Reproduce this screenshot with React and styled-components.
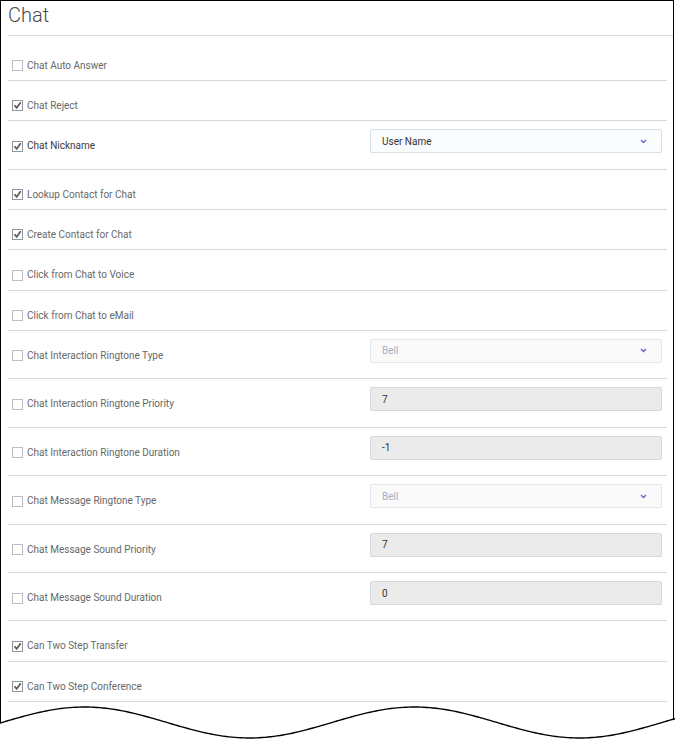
import React from 'react';
import styled, { createGlobalStyle } from 'styled-components';

const GlobalStyle = createGlobalStyle`
  html, body {
    margin: 0;
    padding: 0;
    background: #ffffff;
  }
  body {
    font-family: Roboto, "Liberation Sans", sans-serif;
  }
`;

const Page = styled.div`
  position: relative;
  width: 675px;
  height: 741px;
  overflow: hidden;
  background: #ffffff;
`;

const Frame = styled.div`
  box-sizing: border-box;
  width: 674px;
  height: 741px;
  border: 1px solid #000;
  border-bottom: none;
  padding-left: 7px;
  display: flex;
  flex-direction: column;
`;

const Title = styled.h1`
  margin: 0;
  padding-top: 2px;
  box-sizing: border-box;
  border-bottom: 1px solid #dcdcdc;
  height: 35px;
  font-size: 20px;
  line-height: 24px;
  font-weight: 300;
  color: #4a4a4a;
`;

const List = styled.div`
  padding-top: 4.6px;
  margin-right: 6px;
  display: flex;
  flex-direction: column;
`;

const Row = styled.div`
  display: grid;
  grid-template-columns: 358px 1fr;
  align-items: start;
  padding: 8px 5px 7.3px 4px;
  border-bottom: 1px solid #d8d8d8;
`;

const Label = styled.label`
  display: flex;
  align-items: center;
  gap: 4px;
  height: 24px;
  padding-top: 10px;
  box-sizing: border-box;
  font-size: 10px;
  line-height: 14px;
  color: ${(p) => (p.$strong ? '#3a3a3a' : '#686868')};
  white-space: nowrap;
`;

const Box = styled.svg`
  flex: none;
  width: 11px;
  height: 11px;
`;

const Field = styled.div`
  box-sizing: border-box;
  height: 24px;
  margin-bottom: 8.15px;
  display: flex;
  align-items: center;
  justify-content: space-between;
  padding: 0 12px 0 11px;
  border: 1px solid ${(p) => (p.$kind === 'input' ? '#d4d8de' : p.$disabled ? '#e3e7ec' : '#d8dfe9')};
  border-radius: 2px;
  background: ${(p) => (p.$kind === 'input' ? '#ebebeb' : p.$disabled ? '#fafafa' : '#fbfcfd')};
  font-size: 10px;
  color: ${(p) => (p.$disabled ? '#a3b0c7' : '#333333')};
`;

const Chevron = styled.svg`
  width: 7px;
  height: 5px;
  margin-right: 2px;
`;

const CheckBox = ({ checked }) => (
  <Box viewBox="0 0 11 11">
    <rect x="0.5" y="0.5" width="10" height="10" fill="#fff" stroke={checked ? '#8f959e' : '#b9bec6'} />
    {checked && (
      <path d="M2.5 5.3 L4.6 7.8 L8.8 2.3" fill="none" stroke="#5a5a5a" strokeWidth="1.7" />
    )}
  </Box>
);

const rows = [
  { label: 'Chat Auto Answer' },
  { label: 'Chat Reject', checked: true },
  { label: 'Chat Nickname', checked: true, strong: true, field: { kind: 'select', value: 'User Name' } },
  { label: 'Lookup Contact for Chat', checked: true },
  { label: 'Create Contact for Chat', checked: true },
  { label: 'Click from Chat to Voice' },
  { label: 'Click from Chat to eMail' },
  { label: 'Chat Interaction Ringtone Type', field: { kind: 'select', value: 'Bell', disabled: true } },
  { label: 'Chat Interaction Ringtone Priority', field: { kind: 'input', value: '7' } },
  { label: 'Chat Interaction Ringtone Duration', field: { kind: 'input', value: '-1' } },
  { label: 'Chat Message Ringtone Type', field: { kind: 'select', value: 'Bell', disabled: true } },
  { label: 'Chat Message Sound Priority', field: { kind: 'input', value: '7' } },
  { label: 'Chat Message Sound Duration', field: { kind: 'input', value: '0' } },
  { label: 'Can Two Step Transfer', checked: true },
  { label: 'Can Two Step Conference', checked: true },
];

const WaveSvg = styled.svg`
  position: absolute;
  left: 0;
  bottom: 0;
  width: 675px;
  height: 41px;
`;

// torn-paper edge at the bottom of the page
const Wave = () => {
  const pts = [];
  for (let x = -2; x <= 677; x += 3) {
    const y = 722.5 - 15.5 * Math.sin((2 * Math.PI * (x - 2)) / 330);
    pts.push(`${x},${y.toFixed(2)}`);
  }
  const line = 'M' + pts.join(' L');
  return (
    <WaveSvg viewBox="0 700 675 41">
      <path d={`${line} L677,745 L-2,745 Z`} fill="#fff" />
      <path d={line} fill="none" stroke="#000" strokeWidth="1.4" />
    </WaveSvg>
  );
};

export default function App() {
  return (
    <Page>
      <GlobalStyle />
      <Frame>
        <Title>Chat</Title>
        <List>
          {rows.map((r) => (
            <Row key={r.label}>
              <Label $strong={r.strong}>
                <CheckBox checked={r.checked} />
                {r.label}
              </Label>
              {r.field && (
                <Field $kind={r.field.kind} $disabled={r.field.disabled}>
                  <span>{r.field.value}</span>
                  {r.field.kind === 'select' && (
                    <Chevron viewBox="0 0 7 5">
                      <path d="M1 1 L3.5 3.5 L6 1" fill="none" stroke="#5b66cc" strokeWidth="1.3" />
                    </Chevron>
                  )}
                </Field>
              )}
            </Row>
          ))}
        </List>
      </Frame>
      <Wave />
    </Page>
  );
}
